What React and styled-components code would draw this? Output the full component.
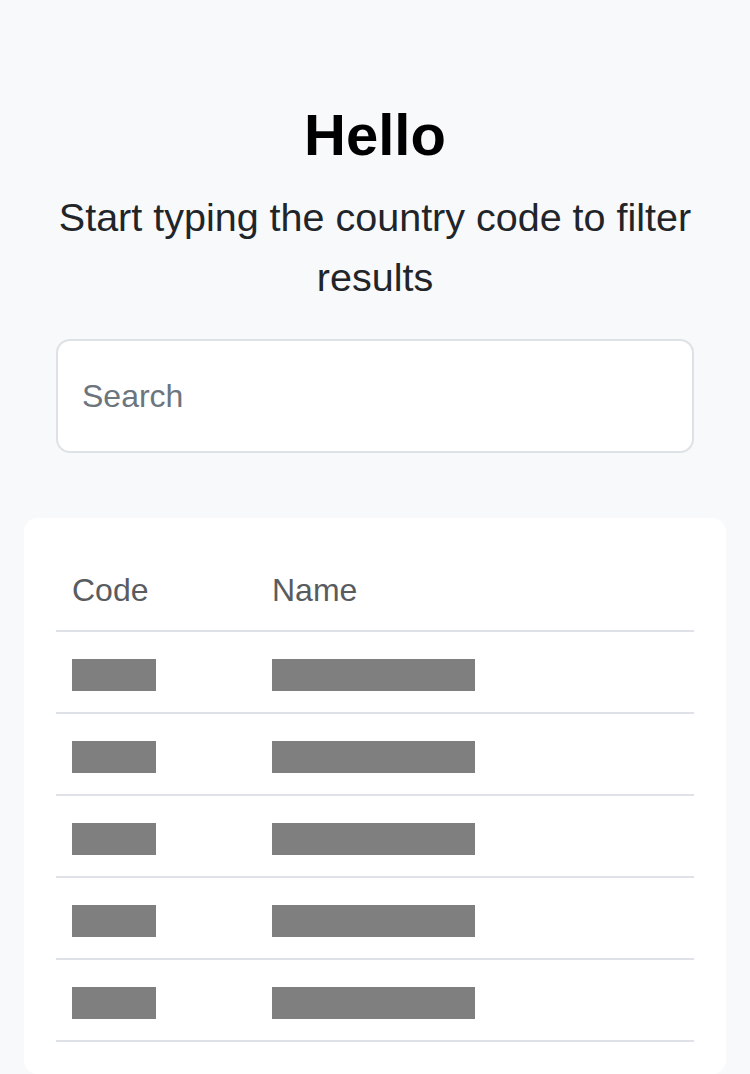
import React from "react";
import styled, { createGlobalStyle } from "styled-components";

const Global = createGlobalStyle`
  html, body {
    margin: 0;
    padding: 0;
    background: #f8f9fa;
  }
  body {
    font-family: "Liberation Sans", Arial, sans-serif;
    color: #212529;
  }
  * { box-sizing: border-box; }
`;

const Page = styled.main`
  min-height: 1074px;
  padding: 99px 24px 0;
  background: #f8f9fa;
`;

const Intro = styled.section`
  padding: 0 32px;
  display: flex;
  flex-direction: column;
  align-items: stretch;
  text-align: center;
`;

const Title = styled.h1`
  margin: 0 0 16px;
  font-size: 58px;
  line-height: 72px;
  font-weight: 700;
  color: #000;
`;

const Lead = styled.p`
  margin: 0 0 32px;
  font-size: 39.5px;
  line-height: 60px;
  font-weight: 300;
  color: #212529;
`;

const SearchInput = styled.input`
  display: block;
  width: 100%;
  height: 114px;
  margin: 0;
  padding: 0 24px;
  border: 2px solid #dee2e6;
  border-radius: 14px;
  background: #fff;
  font-family: "Liberation Sans", Arial, sans-serif;
  font-size: 32px;
  color: #212529;
  outline: none;
  &::placeholder {
    color: #6c757d;
  }
`;

const Card = styled.section`
  margin-top: 65px;
  padding: 32px;
  background: #fff;
  border-radius: 14px;
`;

const Table = styled.table`
  width: 100%;
  border-collapse: collapse;
  table-layout: fixed;
  font-size: 32px;
  line-height: 48px;
`;

const HeadCell = styled.th`
  text-align: left;
  font-weight: 400;
  color: #595c5f;
  padding: 16px;
  border-bottom: 2px solid #dee2e6;
  width: ${(p) => p.$width || "auto"};
`;

const Cell = styled.td`
  padding: 16px;
  border-bottom: 2px solid #dee2e6;
  vertical-align: middle;
`;

const Placeholder = styled.span`
  display: inline-block;
  vertical-align: middle;
  width: ${(p) => p.$width}px;
  height: 32px;
  background: #000;
  opacity: 0.5;
`;

const rows = [0, 1, 2, 3, 4];

export default function App() {
  return (
    <>
      <Global />
      <Page>
        <Intro>
          <Title>Hello</Title>
          <Lead>Start typing the country code to filter results</Lead>
          <SearchInput type="text" placeholder="Search" />
        </Intro>
        <Card>
          <Table>
            <thead>
              <tr>
                <HeadCell $width="200px">Code</HeadCell>
                <HeadCell>Name</HeadCell>
              </tr>
            </thead>
            <tbody>
              {rows.map((r) => (
                <tr key={r}>
                  <Cell>
                    <Placeholder $width={84} />
                  </Cell>
                  <Cell>
                    <Placeholder $width={203} />
                  </Cell>
                </tr>
              ))}
            </tbody>
          </Table>
        </Card>
      </Page>
    </>
  );
}
